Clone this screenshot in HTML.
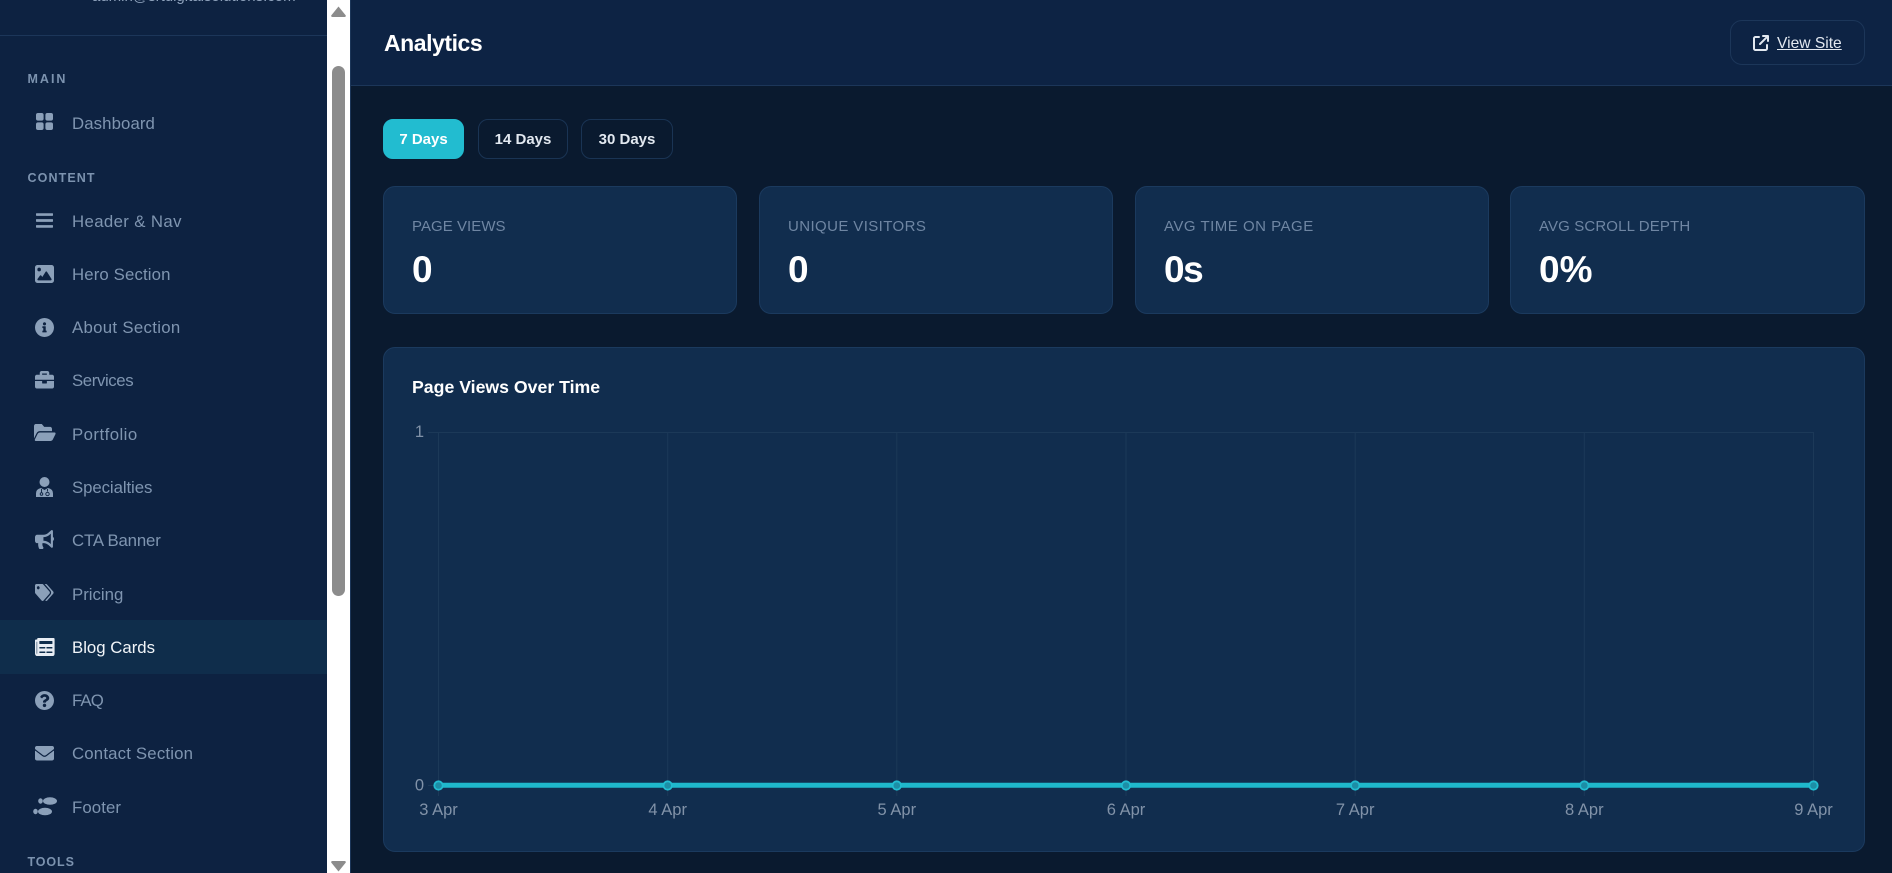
<!DOCTYPE html>
<html lang="en"><head><meta charset="utf-8"><title>Analytics</title>
<style>
*{box-sizing:border-box;margin:0;padding:0}
html,body{width:1892px;height:873px;overflow:hidden;background:#0a1a2f;font-family:"Liberation Sans",Arial,sans-serif}
.abs{position:absolute}
#side{position:absolute;left:0;top:0;width:327px;height:873px;background:#0d2241;overflow:hidden}
#side .email{position:absolute;left:92px;top:-13px;font-size:15px;line-height:20px;color:#8fa3bd;white-space:nowrap}
#side .div{position:absolute;left:0;top:35px;width:327px;height:1px;background:#1c3659}
.lab{position:absolute;left:27.5px;font-size:12.5px;line-height:16px;font-weight:700;color:#7c93af;white-space:nowrap}
.it{position:absolute;left:0;width:327px;height:53px;line-height:53px;font-size:16.8px;color:#7f95b0;white-space:nowrap}
.it span{position:absolute;left:72px;top:0}
.it svg{position:absolute;fill:#8ba0b9;overflow:visible}
.it.on{background:#0f2d4b;color:#f1f5f9}
.it.on svg{fill:#e8edf3}
#sb{position:absolute;left:327px;top:0;width:23px;height:873px;background:#fff}
#sb .th{position:absolute;left:5px;top:66px;width:13px;height:530px;border-radius:7px;background:#8c8c8c}
#line{position:absolute;left:350px;top:0;width:1px;height:873px;background:#1c3659}
#top{position:absolute;left:351px;top:0;width:1541px;height:86px;background:#0d2344;border-bottom:1px solid #1c3659}
#title{position:absolute;left:384px;top:28px;font-size:23px;line-height:30px;font-weight:700;letter-spacing:-.45px;color:#fff}
#vs{position:absolute;left:1730px;top:20px;width:135px;height:45px;border:1px solid #1c3659;border-radius:12px}
#vs a{position:absolute;left:46px;top:13px;font-size:15.6px;line-height:20px;color:#e2e8f0;text-decoration:underline}
#vs svg{position:absolute;left:22px;top:14px;fill:#e2e8f0}
.btn{position:absolute;top:119px;height:40px;border:1px solid #1a3454;border-radius:10px;font-size:15px;font-weight:700;line-height:39.5px;text-align:center;color:#e2e8f0;background:#0a1a2f}
.btn.on{background:#22bcd0;border-color:#22bcd0;color:#fff}
.card{position:absolute;top:186px;width:354px;height:128px;border:1px solid #1b3a5e;border-radius:12px;background:#112d4e}
.card .l{position:absolute;left:28px;top:30px;font-size:15px;line-height:20px;color:#6f86a3;white-space:nowrap}
.card .v{position:absolute;left:28px;top:61px;font-size:37px;line-height:44px;font-weight:700;color:#fff;white-space:nowrap}
#chart{position:absolute;left:383px;top:347px;width:1482px;height:505px;border:1px solid #1b3a5e;border-radius:12px;background:#112d4e}
#chart h3{position:absolute;left:28px;top:27px;font-size:17.7px;line-height:24px;font-weight:700;color:#fff;white-space:nowrap}
#plot{position:absolute;left:0;top:0}
#plot text{font-family:"Liberation Sans",Arial,sans-serif;font-size:16.5px;fill:#8192a8}
</style></head><body>

<div id="side">
<div class="email">admin@srtdigitalsolutions.com</div>
<div class="div"></div>
<div class="lab" style="top:71px;letter-spacing:2px">MAIN</div>
<div class="it" style="top:97px"><svg style="left:36px;top:16px" width="17" height="17" viewBox="0 0 17 17"><rect x="0" y="0" width="7.6" height="7.6" rx="2"/><rect x="9.4" y="0" width="7.6" height="7.6" rx="2"/><rect x="0" y="9.4" width="7.6" height="7.6" rx="2"/><rect x="9.4" y="9.4" width="7.6" height="7.6" rx="2"/></svg><span style="letter-spacing:.1px">Dashboard</span></div>
<div class="lab" style="top:170px;letter-spacing:1.1px">CONTENT</div>
<div class="it" style="top:195px"><svg style="left:36px;top:16px" width="17" height="19" viewBox="0 0 448 512" preserveAspectRatio="none"><path d="M16 132h416c8.837 0 16-7.163 16-16V76c0-8.837-7.163-16-16-16H16C7.163 60 0 67.163 0 76v40c0 8.837 7.163 16 16 16zm0 160h416c8.837 0 16-7.163 16-16v-40c0-8.837-7.163-16-16-16H16c-8.837 0-16 7.163-16 16v40c0 8.837 7.163 16 16 16zm0 160h416c8.837 0 16-7.163 16-16v-40c0-8.837-7.163-16-16-16H16c-8.837 0-16 7.163-16 16v40c0 8.837 7.163 16 16 16z"/></svg><span style="letter-spacing:.37px">Header &amp; Nav</span></div>
<div class="it" style="top:248px"><svg style="left:35px;top:17px" width="19" height="18" viewBox="0 32 512 448" preserveAspectRatio="none"><path d="M0 96C0 60.7 28.7 32 64 32H448c35.3 0 64 28.7 64 64V416c0 35.3-28.7 64-64 64H64c-35.3 0-64-28.7-64-64V96zM323.8 202.5c-4.5-6.6-11.9-10.5-19.8-10.5s-15.4 3.9-19.8 10.5l-87 127.6L170.7 297c-4.6-5.7-11.5-9-18.7-9s-14.2 3.3-18.7 9l-64 80c-5.8 7.2-6.9 17.1-2.9 25.4s12.4 13.6 21.6 13.6h96 32H424c8.9 0 17.1-4.9 21.2-12.8s3.6-17.4-1.4-24.7l-120-176zM112 192a48 48 0 1 0 0-96 48 48 0 1 0 0 96z"/></svg><span style="letter-spacing:.13px">Hero Section</span></div>
<div class="it" style="top:301px"><svg style="left:35px;top:16.5px" width="19" height="19" viewBox="8 8 496 496"><path d="M256 8C119.043 8 8 119.083 8 256c0 136.997 111.043 248 248 248s248-111.003 248-248C504 119.083 392.957 8 256 8zm0 110c23.196 0 42 18.804 42 42s-18.804 42-42 42-42-18.804-42-42 18.804-42 42-42zm56 254c0 6.627-5.373 12-12 12h-88c-6.627 0-12-5.373-12-12v-24c0-6.627 5.373-12 12-12h12v-64h-12c-6.627 0-12-5.373-12-12v-24c0-6.627 5.373-12 12-12h64c6.627 0 12 5.373 12 12v100h12c6.627 0 12 5.373 12 12v24z"/></svg><span style="letter-spacing:.31px">About Section</span></div>
<div class="it" style="top:354px"><svg style="left:35px;top:17px" width="19" height="17.5" viewBox="0 32 512 448" preserveAspectRatio="none"><path d="M320 336c0 8.84-7.16 16-16 16h-96c-8.84 0-16-7.16-16-16v-48H0v144c0 25.6 22.4 48 48 48h416c25.6 0 48-22.4 48-48V288H320v48zm144-208h-80V80c0-25.6-22.4-48-48-48H176c-25.6 0-48 22.4-48 48v48H48c-25.6 0-48 22.4-48 48v80h512v-80c0-25.6-22.4-48-48-48zm-144 0H192V96h128v32z"/></svg><span style="letter-spacing:-.39px">Services</span></div>
<div class="it" style="top:408px"><svg style="left:33.7px;top:16px" width="21.6" height="17" viewBox="0 64 576 384" preserveAspectRatio="none"><path d="M572.694 292.093L500.27 416.248A63.997 63.997 0 0 1 444.989 448H45.025c-18.523 0-30.064-20.093-20.731-36.093l72.424-124.155A64 64 0 0 1 152 256h399.964c18.523 0 30.064 20.093 20.73 36.093zM152 224h328v-48c0-26.51-21.49-48-48-48H272l-64-64H48C21.49 64 0 85.49 0 112v278.046l69.077-118.418C86.214 242.25 117.989 224 152 224z"/></svg><span style="letter-spacing:.45px">Portfolio</span></div>
<div class="it" style="top:461px"><svg style="left:36px;top:16px" width="17" height="20" viewBox="0 0 17 20"><circle cx="8.5" cy="5" r="5"/><path d="M0 20V16.5Q0 12 5 11L8.5 13L12 11Q17 12 17 16.5V20z"/><path d="M5.5 12V16M11.5 12V14.5" stroke="#0d2241" stroke-width=".9" fill="none"/><circle cx="5.5" cy="17" r="1.3" fill="none" stroke="#0d2241" stroke-width=".9"/><circle cx="11.5" cy="17" r="1.7" fill="none" stroke="#0d2241" stroke-width=".9"/></svg><span style="letter-spacing:-.08px">Specialties</span></div>
<div class="it" style="top:514px"><svg style="left:35px;top:16px" width="19" height="19" viewBox="0 0 576 512" preserveAspectRatio="none"><path d="M576 240c0-23.63-12.95-44.04-32-55.12V32.01C544 23.26 537.02 0 512 0c-7.12 0-14.19 2.38-19.98 7.02l-85.03 68.03C364.28 109.19 310.66 128 256 128H64c-35.35 0-64 28.65-64 64v96c0 35.35 28.65 64 64 64h33.7c-1.39 10.48-2.18 21.14-2.18 32 0 39.77 9.26 77.35 25.56 110.94 5.19 10.69 16.52 17.06 28.4 17.06h74.28c26.05 0 41.69-29.84 25.9-50.56-16.4-21.52-26.15-48.36-26.15-77.44 0-11.11 1.62-21.79 4.41-32H256c54.66 0 108.28 18.81 150.98 52.95l85.03 68.03a32.023 32.023 0 0 0 19.98 7.02c24.92 0 32-22.78 32-32V295.13C563.05 284.04 576 263.63 576 240zm-96 141.42l-33.05-26.44C392.95 311.78 325.12 288 256 288v-96c69.12 0 136.95-23.78 190.95-66.98L480 98.58v282.84z"/></svg><span style="letter-spacing:-.15px">CTA Banner</span></div>
<div class="it" style="top:568px"><svg style="left:35px;top:16px" width="18.6" height="17" viewBox="0 0 640 512" preserveAspectRatio="none"><path d="M497.941 225.941L286.059 14.059A48 48 0 0 0 252.118 0H48C21.49 0 0 21.49 0 48v204.118a48 48 0 0 0 14.059 33.941l211.882 211.882c18.744 18.745 49.136 18.746 67.882 0l204.118-204.118c18.745-18.745 18.745-49.137 0-67.882zM112 160c-26.51 0-48-21.49-48-48s21.49-48 48-48 48 21.49 48 48-21.49 48-48 48zm513.941 133.823L421.823 497.941c-18.745 18.745-49.137 18.745-67.882 0l-.36-.36L527.64 323.522c16.999-16.999 26.36-39.6 26.36-63.64s-9.362-46.641-26.36-63.64L331.397 0h48.721a48 48 0 0 1 33.941 14.059l211.882 211.882c18.745 18.745 18.745 49.137 0 67.882z"/></svg><span>Pricing</span></div>
<div class="it on" style="top:620px;height:53.5px;line-height:55px"><svg style="left:35px;top:18px" width="19.6" height="18" viewBox="0 64 576 384" preserveAspectRatio="none"><path d="M552 64H88c-13.255 0-24 10.745-24 24v8H24c-13.255 0-24 10.745-24 24v272c0 30.928 25.072 56 56 56h472c26.51 0 48-21.49 48-48V88c0-13.255-10.745-24-24-24zM56 400a8 8 0 0 1-8-8V144h16v248a8 8 0 0 1-8 8zm236-16H140c-6.627 0-12-5.373-12-12v-8c0-6.627 5.373-12 12-12h152c6.627 0 12 5.373 12 12v8c0 6.627-5.373 12-12 12zm208 0H348c-6.627 0-12-5.373-12-12v-8c0-6.627 5.373-12 12-12h152c6.627 0 12 5.373 12 12v8c0 6.627-5.373 12-12 12zm-208-96H140c-6.627 0-12-5.373-12-12v-8c0-6.627 5.373-12 12-12h152c6.627 0 12 5.373 12 12v8c0 6.627-5.373 12-12 12zm208 0H348c-6.627 0-12-5.373-12-12v-8c0-6.627 5.373-12 12-12h152c6.627 0 12 5.373 12 12v8c0 6.627-5.373 12-12 12zm0-96H140c-6.627 0-12-5.373-12-12v-40c0-6.627 5.373-12 12-12h360c6.627 0 12 5.373 12 12v40c0 6.627-5.373 12-12 12z"/></svg><span>Blog Cards</span></div>
<div class="it" style="top:674px"><svg style="left:35px;top:17px" width="19" height="19" viewBox="8 8 496 496"><path d="M504 256c0 136.997-111.043 248-248 248S8 392.997 8 256C8 119.083 119.043 8 256 8s248 111.083 248 248zM262.655 90c-54.497 0-89.255 22.957-116.549 63.758-3.536 5.286-2.353 12.415 2.715 16.258l34.699 26.31c5.205 3.947 12.621 3.008 16.665-2.122 17.864-22.658 30.113-35.797 57.303-35.797 20.429 0 45.698 13.148 45.698 32.958 0 14.976-12.363 22.667-32.534 33.976C247.128 238.528 216 254.941 216 296v4c0 6.627 5.373 12 12 12h56c6.627 0 12-5.373 12-12v-1.333c0-28.462 83.186-29.647 83.186-106.667 0-58.002-60.165-102-116.531-102zM256 338c-25.365 0-46 20.635-46 46 0 25.364 20.635 46 46 46s46-20.636 46-46c0-25.365-20.635-46-46-46z"/></svg><span style="letter-spacing:-.9px">FAQ</span></div>
<div class="it" style="top:727px"><svg style="left:35px;top:19px" width="19" height="14.5" viewBox="0 64 512 384" preserveAspectRatio="none"><path d="M502.3 190.8c3.9-3.1 9.7-.2 9.7 4.7V400c0 26.5-21.5 48-48 48H48c-26.5 0-48-21.5-48-48V195.6c0-5 5.7-7.8 9.7-4.7 22.4 17.4 52.1 39.5 154.1 113.6 21.1 15.4 56.7 47.8 92.2 47.6 35.7.3 72-32.8 92.3-47.6 102-74.1 131.6-96.3 154-113.7zM256 320c23.2.4 56.6-29.2 73.4-41.4 132.7-96.3 142.8-104.7 173.4-128.7 5.8-4.5 9.2-11.5 9.2-18.9v-19c0-26.5-21.5-48-48-48H48C21.5 64 0 85.5 0 112v19c0 7.4 3.4 14.3 9.2 18.9 30.6 23.9 40.7 32.4 173.4 128.7 16.8 12.2 50.2 41.8 73.4 41.4z"/></svg><span style="letter-spacing:.18px">Contact Section</span></div>
<div class="it" style="top:781px"><svg style="left:32.7px;top:15.5px" width="24" height="20" viewBox="0 0 24 20"><ellipse cx="7.5" cy="4" rx="2.3" ry="2.7"/><ellipse cx="17" cy="4" rx="7" ry="3.8"/><ellipse cx="2.5" cy="14.5" rx="2.3" ry="2.7"/><ellipse cx="12" cy="14.5" rx="7" ry="3.8"/></svg><span style="letter-spacing:.1px">Footer</span></div>
<div class="lab" style="top:854px;letter-spacing:.9px">TOOLS</div>
</div>

<div id="sb">
<svg class="abs" style="left:4px;top:6px" width="15" height="11" viewBox="0 0 15 11"><path d="M7.5 .5L14.8 9.5Q15 11 13.5 11H1.5Q0 11 .2 9.5z" fill="#8c8c8c"/></svg>
<div class="th"></div>
<svg class="abs" style="left:4px;top:861px" width="15" height="11" viewBox="0 0 15 11"><path d="M7.5 10.5L14.8 1.5Q15 0 13.5 0H1.5Q0 0 .2 1.5z" fill="#8c8c8c"/></svg>
</div>
<div id="line"></div>

<div id="top"></div>
<div id="title">Analytics</div>
<div id="vs"><svg width="16" height="16" viewBox="0 0 512 512"><path d="M320 0c-17.7 0-32 14.3-32 32s14.3 32 32 32h82.7L201.4 265.4c-12.5 12.5-12.5 32.8 0 45.3s32.8 12.5 45.3 0L448 109.3V192c0 17.7 14.3 32 32 32s32-14.3 32-32V32c0-17.7-14.3-32-32-32H320zM80 32C35.8 32 0 67.8 0 112V432c0 44.2 35.8 80 80 80H400c44.2 0 80-35.8 80-80V320c0-17.7-14.3-32-32-32s-32 14.3-32 32V432c0 8.8-7.2 16-16 16H80c-8.8 0-16-7.2-16-16V112c0-8.8 7.2-16 16-16H192c17.7 0 32-14.3 32-32s-14.3-32-32-32H80z"/></svg><a>View Site</a></div>

<div class="btn on" style="left:383px;width:81px">7 Days</div>
<div class="btn" style="left:478px;width:90px">14 Days</div>
<div class="btn" style="left:581px;width:92px">30 Days</div>

<div class="card" style="left:383px"><div class="l" style="letter-spacing:.05px">PAGE VIEWS</div><div class="v">0</div></div>
<div class="card" style="left:759px"><div class="l" style="letter-spacing:.4px">UNIQUE VISITORS</div><div class="v">0</div></div>
<div class="card" style="left:1135px"><div class="l" style="letter-spacing:.5px">AVG TIME ON PAGE</div><div class="v" style="letter-spacing:-1.5px">0s</div></div>
<div class="card" style="left:1510px;width:355px"><div class="l" style="letter-spacing:.13px">AVG SCROLL DEPTH</div><div class="v">0%</div></div>

<div id="chart"><h3>Page Views Over Time</h3></div>
<svg id="plot" class="abs" width="1892" height="873" viewBox="0 0 1892 873">
<g stroke="#1c3958" stroke-width="1" fill="none">
<path d="M428 432.5H1813.5M428 785.5H1813.5"/>
<path d="M438.5 432V796M667.7 432V796M896.8 432V796M1126 432V796M1355.2 432V796M1584.3 432V796M1813.5 432V796"/>
</g>
<path d="M438.5 785.3H1813.5" stroke="#1fb8cc" stroke-width="5" fill="none"/>
<g fill="#1d8ea6" stroke="#22bcd0" stroke-width="1.8">
<circle cx="438.5" cy="785.5" r="4.2"/><circle cx="667.7" cy="785.5" r="4.2"/><circle cx="896.8" cy="785.5" r="4.2"/><circle cx="1126" cy="785.5" r="4.2"/><circle cx="1355.2" cy="785.5" r="4.2"/><circle cx="1584.3" cy="785.5" r="4.2"/><circle cx="1813.5" cy="785.5" r="4.2"/>
</g>
<text x="424" y="437" text-anchor="end">1</text>
<text x="424" y="790.5" text-anchor="end">0</text>
<g text-anchor="middle">
<text x="438.5" y="815">3 Apr</text><text x="667.7" y="815">4 Apr</text><text x="896.8" y="815">5 Apr</text><text x="1126" y="815">6 Apr</text><text x="1355.2" y="815">7 Apr</text><text x="1584.3" y="815">8 Apr</text><text x="1813.5" y="815">9 Apr</text>
</g>
</svg>
</body></html>
